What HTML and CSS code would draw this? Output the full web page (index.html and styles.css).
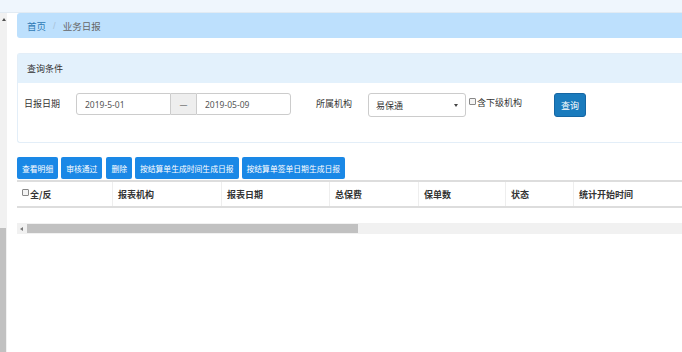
FILE: index.html
```html
<!DOCTYPE html>
<html lang="zh-CN">
  <head>
    <meta charset="UTF-8" />
    <title>业务日报</title>
    <link rel="stylesheet" href="styles.css">
  </head>
  <body>
    <div class="topbar"></div>
    <div class="frame">
      <div class="vscroll">
        <span class="arrow-up"></span>
        <div class="vthumb"></div>
      </div>

      <div class="main">
        <div class="crumb">
          <a class="crumb-home">首页</a>
          <span class="crumb-sep">/</span>
          <span class="crumb-cur">业务日报</span>
        </div>

        <div class="panel">
          <div class="panel-head">查询条件</div>
          <div class="panel-body">
            <label class="lbl">日报日期</label>
            <div class="range">
              <input class="field" value="2019-5-01" />
              <span class="addon">—</span>
              <input class="field" value="2019-05-09" />
            </div>
            <label class="lbl lbl-org">所属机构</label>
            <div class="select">
              <span>易保通</span>
              <span class="caret"></span>
            </div>
            <label class="check"><span class="box"></span>含下级机构</label>
            <button class="btn-query">查询</button>
          </div>
        </div>

        <div class="toolbar">
          <button class="btn">查看明细</button>
          <button class="btn">审核通过</button>
          <button class="btn">删除</button>
          <button class="btn">按结算单生成时间生成日报</button>
          <button class="btn">按结算单签单日期生成日报</button>
        </div>

        <div class="grid">
          <div class="th c1"><span class="box"></span>全/反</div>
          <div class="th c2">报表机构</div>
          <div class="th c3">报表日期</div>
          <div class="th c4">总保费</div>
          <div class="th c5">保单数</div>
          <div class="th c6">状态</div>
          <div class="th c7">统计开始时间</div>
        </div>

        <div class="hscroll">
          <span class="arrow-left"></span>
          <div class="hthumb"></div>
        </div>
      </div>
    </div>
  </body>
</html>
```

FILE: styles.css
```css
* {
  padding: 0;
  margin: 0;
  box-sizing: border-box;
}

body {
  width: 682px;
  height: 352px;
  overflow: hidden;
  font-family: "Noto Sans CJK SC", "Noto Sans", sans-serif;
  font-size: 9px;
  color: #333;
  background: #fff;
}

.topbar {
  height: 13px;
  background: #eff6fd;
  border-bottom: 1px solid #e2ebf3;
}

.frame {
  display: flex;
  height: 339px;
}

.vscroll {
  width: 7px;
  background: #f1f1f1;
  display: flex;
  flex-direction: column;
  align-items: center;
}

.arrow-up {
  margin-top: 5px;
  width: 0;
  height: 0;
  border-left: 2px solid transparent;
  border-right: 2px solid transparent;
  border-bottom: 3px solid #505050;
}

.vthumb {
  margin-top: auto;
  width: 6px;
  height: 124px;
  background: #c1c1c1;
  align-self: flex-start;
}

.main {
  flex: 1;
  padding-left: 10px;
  min-width: 0;
}

.crumb {
  height: 25px;
  background: #bde0fd;
  border-radius: 3px 0 0 3px;
  display: flex;
  align-items: center;
  padding-left: 10px;
  font-size: 9.5px;
}

.crumb-home {
  color: #2f7ab5;
}

.crumb-sep {
  color: #a9c3d9;
  margin: 0 7px;
  font-family: "Liberation Sans", sans-serif;
}

.crumb-cur {
  color: #666;
}

.panel {
  margin-top: 15px;
  border: 1px solid #e3eef8;
  border-right: 0;
  border-radius: 3px 0 0 3px;
}

.panel-head {
  height: 29px;
  background: #e3f1fc;
  display: flex;
  align-items: center;
  padding-left: 9px;
  color: #333;
}

.panel-body {
  height: 59px;
  display: flex;
  align-items: flex-start;
  padding-top: 10px;
  padding-left: 6px;
}

.lbl {
  line-height: 22px;
  width: 52px;
  color: #333;
}

.lbl-org {
  margin-left: 25px;
}

.range {
  display: flex;
  height: 22px;
}

.field {
  width: 95px;
  height: 22px;
  border: 1px solid #ccc;
  padding-left: 8px;
  font-family: "Noto Sans", sans-serif;
  font-size: 8.5px;
  color: #555;
  outline: none;
}

.field:first-child {
  border-radius: 3px 0 0 3px;
}

.field:last-child {
  border-radius: 0 3px 3px 0;
}

.addon {
  width: 25px;
  background: #eee;
  border-top: 1px solid #ccc;
  border-bottom: 1px solid #ccc;
  display: flex;
  align-items: center;
  justify-content: center;
  color: #555;
}

.select {
  width: 98px;
  height: 24px;
  border: 1px solid #ccc;
  border-radius: 3px;
  display: flex;
  align-items: center;
  justify-content: space-between;
  padding: 0 7px;
  color: #333;
}

.caret {
  width: 0;
  height: 0;
  border-left: 2px solid transparent;
  border-right: 2px solid transparent;
  border-top: 3px solid #444;
}

.check {
  display: flex;
  align-items: flex-start;
  margin-left: 3px;
  margin-top: 3px;
  color: #333;
}

.box {
  display: inline-block;
  width: 7px;
  height: 7px;
  border: 1px solid #888;
  border-radius: 1px;
  background: #f4f4f4;
  margin-top: 2px;
  margin-right: 1px;
}

.btn-query {
  margin-left: 32px;
  width: 32px;
  height: 24px;
  border: 1px solid #1566a3;
  border-radius: 3px;
  background: #1a7bbd;
  color: #fff;
  font-family: inherit;
  font-size: 9px;
}

.toolbar {
  margin-top: 14px;
  display: flex;
  gap: 3px;
}

.btn {
  height: 22px;
  padding: 0 5px;
  border: 0;
  border-radius: 2px;
  background: #1a88e6;
  color: #fff;
  font-family: inherit;
  font-size: 7.8px;
}

.btn:nth-child(3) {
  margin-left: 1px;
}

.grid {
  margin-top: 1px;
  display: flex;
  border-top: 2px solid #ddd;
  border-bottom: 2px solid #ddd;
  height: 28px;
}

.th {
  display: flex;
  align-items: center;
  padding-left: 5px;
  font-weight: bold;
  color: #333;
  border-right: 1px solid #eee;
}

.c1 { width: 96px; padding-left: 5px; }
.c2 { width: 109px; }
.c3 { width: 108px; }
.c4 { width: 89px; }
.c5 { width: 87px; }
.c6 { width: 68px; }
.c7 { flex: 1; border-right: 0; }

.c1 .box {
  margin-top: -3px;
}

.hscroll {
  margin-top: 15px;
  height: 11px;
  background: #f1f1f1;
  display: flex;
  align-items: center;
}

.arrow-left {
  margin-left: 3px;
  width: 0;
  height: 0;
  border-top: 2px solid transparent;
  border-bottom: 2px solid transparent;
  border-right: 3px solid #777;
}

.hthumb {
  margin-left: 4px;
  width: 331px;
  height: 9px;
  background: #c1c1c1;
}
```
